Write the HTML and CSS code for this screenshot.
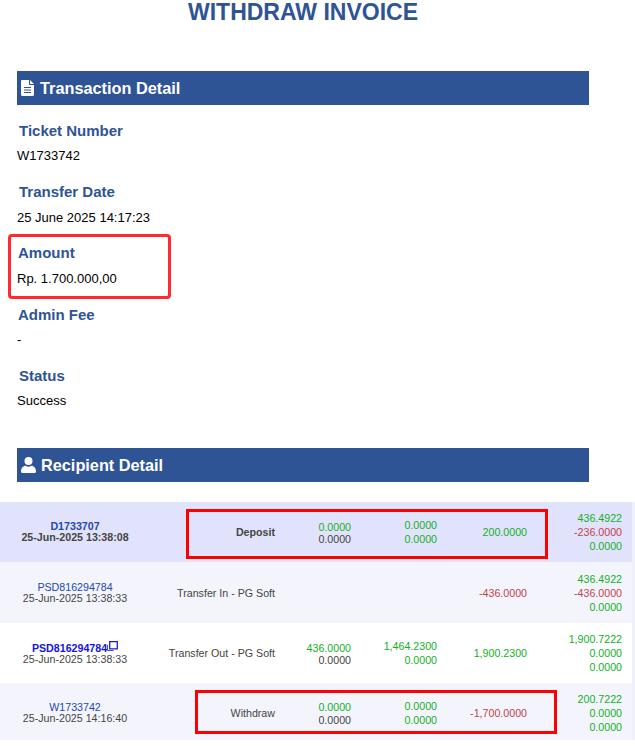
FILE: index.html
```html
<!DOCTYPE html>
<html lang="en">
<head>
<meta charset="utf-8">
<title>Withdraw Invoice</title>
<link rel="stylesheet" href="styles.css">
</head>
<body>
<main class="invoice">
  <h1 class="title">WITHDRAW INVOICE</h1>
  <h2 class="bar bar-first">
    <svg class="bar-icon" width="13" height="16" viewBox="0 0 13 16"><path fill="#fff" fill-rule="evenodd" d="M0 1.2C0 .5.5 0 1.2 0H8v4.2c0 .5.4.8.8.8H13v9.8c0 .7-.5 1.2-1.2 1.2H1.2C.5 16 0 15.500 0 14.800ZM9 0l4 4H9ZM3 7h7v1H3Zm0 2.500h7v1H3ZM3 12h7v1H3Z"/></svg>
    <span>Transaction Detail</span>
  </h2>
  <section class="detail">
    <div class="field"><h3 class="label">Ticket Number</h3><p class="value">W1733742</p></div>
    <div class="field"><h3 class="label">Transfer Date</h3><p class="value">25 June 2025 14:17:23</p></div>
    <div class="field"><h3 class="label label-a">Amount</h3><p class="value">Rp. 1.700.000,00</p></div>
    <div class="field"><h3 class="label label-a">Admin Fee</h3><p class="value">-</p></div>
    <div class="field"><h3 class="label">Status</h3><p class="value">Success</p></div>
    <div class="mark mark-amount"></div>
  </section>
  <h2 class="bar bar-second">
    <svg class="bar-icon" width="15" height="16" viewBox="0 0 15 16"><circle cx="7.500" cy="4" r="4" fill="#fff"/><path fill="#fff" d="M0 14.500C0 11 2.500 8.800 4.500 8.800c1 .6 1.900.9 3 .9s2-.3 3-.9c2 0 4.500 2.200 4.500 5.700 0 .9-.6 1.500-1.500 1.500h-12C.6 16 0 15.400 0 14.500Z"/></svg>
    <span>Recipient Detail</span>
  </h2>
</main>
<section class="ledger">
  <div class="row row-blue">
    <div class="ref strong"><a class="ref-id">D1733707</a><span>25-Jun-2025 13:38:08</span></div>
    <div class="kind strong">Deposit</div>
    <div class="pair tight"><span class="pos">0.0000</span><span>0.0000</span></div>
    <div class="pair"><span class="pos">0.0000</span><span class="pos">0.0000</span></div>
    <div class="num pos">200.0000</div>
    <div class="trio"><span class="pos">436.4922</span><span class="neg">-236.0000</span><span class="pos">0.0000</span></div>
  </div>
  <div class="row row-grey">
    <div class="ref"><a class="ref-id">PSD816294784</a><span>25-Jun-2025 13:38:33</span></div>
    <div class="kind">Transfer In - PG Soft</div>
    <div class="pair tight"></div>
    <div class="pair"></div>
    <div class="num neg">-436.0000</div>
    <div class="trio"><span class="pos">436.4922</span><span class="neg">-436.0000</span><span class="pos">0.0000</span></div>
  </div>
  <div class="row row-white">
    <div class="ref"><a class="ref-id link">PSD816294784<svg class="copy" width="11" height="10" viewBox="0 0 11 10"><path fill="none" stroke="#1c1cd8" stroke-width="1.300" d="M2.700.7h7.600v7.200H2.700z"/><path fill="none" stroke="#1c1cd8" stroke-width=".8" d="M.5 4v5.500h6"/></svg></a><span>25-Jun-2025 13:38:33</span></div>
    <div class="kind">Transfer Out - PG Soft</div>
    <div class="pair tight"><span class="pos">436.0000</span><span>0.0000</span></div>
    <div class="pair"><span class="pos">1,464.2300</span><span class="pos">0.0000</span></div>
    <div class="num pos">1,900.2300</div>
    <div class="trio"><span class="pos">1,900.7222</span><span class="pos">0.0000</span><span class="pos">0.0000</span></div>
  </div>
  <div class="row row-grey row-last">
    <div class="ref"><a class="ref-id">W1733742</a><span>25-Jun-2025 14:16:40</span></div>
    <div class="kind">Withdraw</div>
    <div class="pair tight"><span class="pos">0.0000</span><span>0.0000</span></div>
    <div class="pair"><span class="pos">0.0000</span><span class="pos">0.0000</span></div>
    <div class="num neg">-1,700.0000</div>
    <div class="trio"><span class="pos">200.7222</span><span class="pos">0.0000</span><span class="pos">0.0000</span></div>
  </div>
  <div class="mark mark-deposit"></div>
  <div class="mark mark-withdraw"></div>
</section>
</body>
</html>
```
FILE: styles.css
```css
html, body { margin: 0; padding: 0; background: #fff; }
body { font-family: "Liberation Sans", Arial, sans-serif; color: #000; width: 635px; height: 746px; overflow: hidden; }

.invoice { padding: 0 46px 0 17px; }
.title { margin: 0; height: 71px; font-size: 23px; line-height: 24px; font-weight: 700; color: #2e5496; text-align: center; }
.bar { margin: 0; display: flex; align-items: center; gap: 6px; background: #2e5496; color: #fff; font-size: 16.300px; font-weight: 700; padding-left: 4px; }
.bar-first { height: 34px; }
.bar-second { height: 34px; gap: 5px; }
.bar-icon { flex: none; }

.detail { position: relative; padding-top: 15.900px; height: 343px; box-sizing: border-box; }
.field { height: 61.25px; }
.label { margin: 0 0 0 2px; font-size: 15px; line-height: 20px; font-weight: 700; color: #2e5496; }
.label-a { margin-left: 1px; }
.value { margin: 7.400px 0 0; font-size: 13px; line-height: 16px; }

.mark { position: absolute; box-sizing: border-box; border-style: solid; }
.mark-amount { left: -9px; top: 129px; width: 163px; height: 65px; border: 3px solid #ff2a2f; border-radius: 4px; }

.ledger { position: relative; margin-top: 20px; padding-right: 3px; background: #eef0fa; height: 238px; color: #444; font-size: 10.670px; }
.row { display: grid; grid-template-columns: 150px 125px 76px 86px 90px 95px 10px; align-items: center; }
.row-blue { height: 60px; background: #e1e3fc; }
.row-grey { height: 61px; background: #f4f5fc; }
.row-white { height: 60px; background: #fff; }
.row-last { height: 57px; box-sizing: border-box; padding-top: 2px; }
.ref { display: flex; flex-direction: column; align-items: center; line-height: 11px; }
.ref-id { color: #2347b4; display: block; }
.ref-id.link { color: #1414e6; font-weight: 700; }
.strong { font-weight: 700; }
.copy { vertical-align: 1px; }
.kind { text-align: right; }
.pair, .trio, .num { text-align: right; }
.pair span, .trio span { display: block; }
.pair { line-height: 14px; }
.tight { line-height: 12.500px; padding-top: 2px; }
.trio { line-height: 14px; }
.pos { color: #12b01e; }
.neg { color: #c2414b; }

.mark-deposit { left: 186px; top: 7px; width: 362px; height: 50px; border: 3px solid #f00; }
.mark-withdraw { left: 195px; top: 188px; width: 362px; height: 44px; border: 3px solid #f00; }
```
